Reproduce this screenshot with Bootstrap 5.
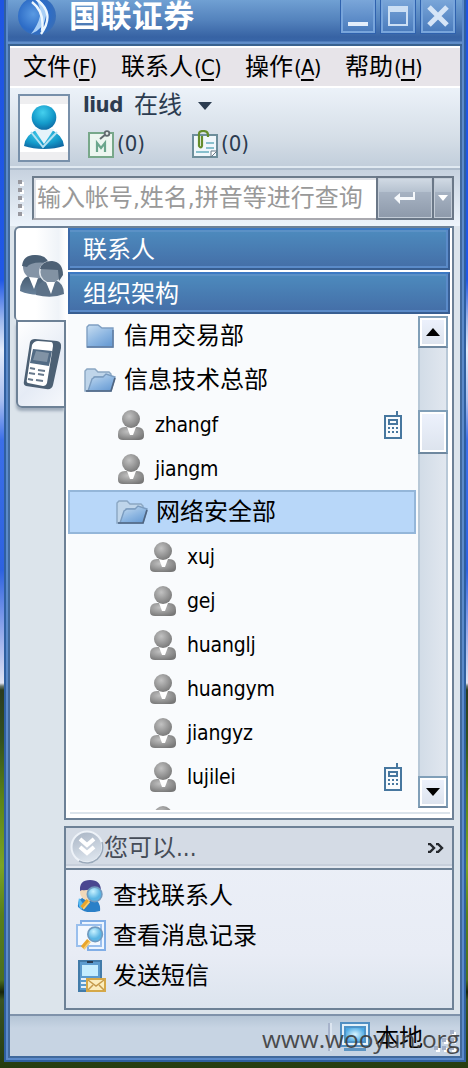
<!DOCTYPE html>
<html lang="zh-CN">
<head>
<meta charset="utf-8">
<meta name="viewport" content="width=device-width, initial-scale=1">
<title>国联证券</title>
<link href="https://cdn.jsdelivr.net/npm/bootstrap@5.3.0/dist/css/bootstrap.min.css" rel="stylesheet">
<script src="https://cdn.jsdelivr.net/npm/bootstrap@5.3.0/dist/js/bootstrap.bundle.min.js"></script>
<style>
*{border-radius:0}
body{width:468px;height:1068px;overflow:hidden;margin:0;padding:0 2px 6px 4px;font-family:"DejaVu Sans Condensed","Noto Sans CJK SC",sans-serif;font-size:24px;line-height:30px;color:#000;
background:linear-gradient(#1f55e2 0,#2058e6 280px,#9db8ee 320px,#e4ecfb 350px,#a8bff0 400px,#3c6fe8 440px,#2d62e0 570px,#a8b8ee 645px,#dfe3f2 683px,#6d7a72 686px,#2b3b20 690px,#33511f 740px,#5c8418 800px,#7ba326 866px,#587f1b 915px,#4b6e20 980px,#172409 992px,#3a5422 1000px,#263c10 1068px)}
body,.lt{font-weight:400}
.frame{height:1062px;padding:0 2px 2px;background:#5b8aca;border:solid #2f5f9f;border-width:0 2px 2px}
.inner{height:1058px;border:solid #41699c;border-width:0 2px 2px;background:#dce4eb}
.titlebar{height:46px;margin:0 -2px;background:linear-gradient(#70a0d3 0,#5483bd 20px,#3763a4 37px,#3966a8 41px,#6390cb 42px,#5c8ac6 44px,#39628f 44px);padding:0 7px 0 10px;color:#fff}
.brand{font-size:31px;font-weight:700;line-height:33px;letter-spacing:.4px;margin-left:13px}
.winbtn{width:34px;height:33px;border:2px solid #78a5db;border-top:0;box-shadow:0 0 0 1px #2f62ae;background:linear-gradient(#7aa6d9,#4b7cbd)}
.menubar{height:42px;background:#e7e4e9;border:solid #fff;border-width:2px 0;line-height:38px}
.menubar .lt{font-size:22px;letter-spacing:-.8px;margin-left:1px}
.menubar u{text-decoration-thickness:2px;text-underline-offset:4px}
.person{height:82px;background:linear-gradient(#ecf2f9,#d5dee7 50px,#c2cedb 78px,#e0e9f1 78px,#e0e9f1 80px,#aebccc 80px);color:#2c3c50}
.avatar{width:52px;height:68px;border:2px solid #7890aa;background:#fff;margin:6px 0 0 8px}
.search{height:56px;background:linear-gradient(#c7d2df,#edf4fb);padding:6px 6px 6px 8px}
.grip{width:6px;height:36px;margin-top:4px;background:repeating-linear-gradient(#98989f 0 4px,transparent 4px 8px) 0 0/4px 36px no-repeat,repeating-linear-gradient(#fff 0 4px,transparent 4px 8px) 2px 2px/4px 36px no-repeat}
.query{width:346px;height:44px;border:2px solid #6d7c8c;border-bottom-color:#aaaab0;border-right:0;box-shadow:inset 2px 2px #dfe2e8;background:#fff;color:#999;padding-left:3px;line-height:40px;font-size:24px;white-space:nowrap}
.go{height:44px;border:2px solid #6a7787;background:linear-gradient(#d2dbe5,#b6c2d0 34%,#a6b2c2 36%,#8d99aa);box-shadow:inset 0 0 0 1px #c3ccd7}
.main{height:594px;padding:0 6px 0 4px}
.tabs{width:52px;position:relative;z-index:1}
.tab1{height:94px;border:2px solid #6d8196;border-right:0;border-bottom:0;border-radius:6px 0 0 4px;background:linear-gradient(90deg,#fff 40%,#eff3f8 85%,#fff)}
.tab2{height:88px;width:50px;margin-left:2px;border:2px solid #6d8196;border-radius:0 0 0 6px;background:linear-gradient(135deg,#fff,#e5ebf5 60%,#f6f8fc);box-shadow:-1px 4px 3px -1px #9eabba}
.panel{width:390px;margin-left:-2px;border:2px solid #6d8196;background:#fff;padding-left:2px}
.group{width:382px;height:42px;margin-bottom:2px;border:2px solid;border-color:#3c79c3 #385f96 #385e91 #3b69a8;background:linear-gradient(#4d8bbe,#446ea7);box-shadow:inset -2px -2px #5b8bc9,inset 0 2px #5b91c6;color:#fff;padding-left:13px;line-height:40px}
.listing{height:496px}
.rows{width:350px;background:#f9fbfd;overflow:hidden;height:496px}
.item{width:348px;height:44px;border:2px solid transparent;font-size:24px}
.item .lt{font-size:21px;letter-spacing:-.2px;position:relative;top:1px;left:-1px}
.item.active{background:#b8d7f9;border-color:#94b6d9}
.lv1{padding-left:11px}.lv2{padding-left:44px}
.lv2u{padding-left:48px}.lv3u{padding-left:80px}
.lv2u svg,.lv3u svg{margin-top:2px}
.cell{margin-left:auto;margin-right:12px}
.scroll{width:30px;height:492px;margin-top:2px;border:solid #b8c8d7;border-width:0 2px;background:linear-gradient(90deg,#d2dce7,#e1e7ef)}
.sbtn{width:30px;margin-left:-2px;border:2px solid #809fb8;border-bottom-color:#6f889f;background:linear-gradient(#edf2fd,#dce3ed);box-shadow:inset 0 0 0 2px #fff}
.tasks{width:390px;height:184px;margin:6px 0 0 54px;border:2px solid #6d8196;background:linear-gradient(#ecf0f8,#e8ecf5 70%,#dce4ee)}
.taskhead{height:42px;border-bottom:2px solid #6d8196;background:linear-gradient(#d4dbe5 36px,#c7cfdb 36px,#c7cfdb 38px,#e3e8f0 38px);color:#454c57}
.task{height:40px;padding-left:10px;gap:7px}
.status{height:42px;margin-top:4px;border-top:2px solid #7f92aa;background:linear-gradient(#b5c5d6,#c7d4e3 12px);padding:2px 36px 0 0}
.mark-url{position:absolute;left:262px;top:1022px;font:24.4px/34px "Open Sans",sans-serif;color:#3c3c3c;opacity:.9;white-space:nowrap}
svg{display:block;flex:none}
</style>
</head>
<body>
<svg width="0" height="0" class="position-absolute">
<defs>
<radialGradient id="gh" cx=".4" cy=".35" r=".7"><stop stop-color="#c2c2c2"/><stop offset="1" stop-color="#777"/></radialGradient>
<linearGradient id="fold" x2=".7" y2="1"><stop stop-color="#c9def1"/><stop offset=".6" stop-color="#8eb7e2"/><stop offset="1" stop-color="#6c9ed5"/></linearGradient>
<radialGradient id="cy" cx=".45" cy=".3" r=".8"><stop stop-color="#45d0ee"/><stop offset=".55" stop-color="#149bcb"/><stop offset="1" stop-color="#0d5b98"/></radialGradient>
<linearGradient id="steel" x2="0" y2="1"><stop stop-color="#465b70"/><stop offset="1" stop-color="#68819a"/></linearGradient>
<radialGradient id="lens" cx=".4" cy=".3"><stop stop-color="#c8f2ff"/><stop offset="1" stop-color="#5bb5e4"/></radialGradient>
<symbol id="user" viewBox="0 0 26 30"><path d="M0 24q0-7 7-7h12q7 0 7 7v2q0 4-5 4H5q-5 0-5-4z" fill="url(#gh)"/><path d="M9 17h9l-3 8h-3z" fill="#fff"/><circle cx="13" cy="9" r="9" fill="url(#gh)"/></symbol>
<symbol id="folder" viewBox="0 0 28 24"><path d="M1 3l2-2h9l4 3h11v19H1z" fill="url(#fold)" stroke="#7f9fc2" stroke-width="1.4"/><path d="M1 23h26V6" fill="none" stroke="#5c7ba2" stroke-width="1.4"/></symbol>
<symbol id="open" viewBox="0 0 32 24"><path d="M1 3l2-2h8l3 3h11l2 2v3H10L5 23H1z" fill="#bfd5ea" stroke="#8aa6c2" stroke-width="1.4"/><path d="M4 23l4-12 3-2h8l3-3 9 3-4 14z" fill="url(#fold)" stroke="#7b9cc0" stroke-width="1.4"/><path d="M2 23h25l4-13" fill="none" stroke="#4f6582" stroke-width="1.7"/></symbol>
<symbol id="mobile" viewBox="0 0 18 28" shape-rendering="crispEdges"><path d="M12 0h2v4h-2zM0 4h18v24H0zM2 6v20h14V6z" fill="#47779f" fill-rule="evenodd"/><path d="M4 8h10v6H4zM6 10v2h6v-2z" fill="#47779f" fill-rule="evenodd"/><path d="M4 16h2v2H4zm4 0h2v2H8zm4 0h2v2h-2zM4 20h2v2H4zm4 0h2v2H8zm4 0h2v2h-2z" fill="#47779f"/></symbol>
<symbol id="glass" viewBox="0 0 22 24"><path d="M8 14L2 21" stroke="#e9a52b" stroke-width="4.5"/><path d="M9 15l-6 7" stroke="#f5cf76" stroke-width="1.5"/><circle cx="14" cy="8" r="7" fill="url(#lens)" stroke="#719abf" stroke-width="1.6"/></symbol>
</defs>
</svg>

<div class="frame"><div class="inner">
<header class="titlebar d-flex align-items-start">
  <svg width="38" height="35" viewBox="0 0 38 35"><defs><radialGradient id="ball" cx=".4" cy=".45" r=".6"><stop stop-color="#5a9ae2"/><stop offset=".7" stop-color="#2d6cc6"/><stop offset="1" stop-color="#376eb9"/></radialGradient></defs><circle cx="19" cy="16" r="19" fill="url(#ball)"/><path d="M18-1q12 5 10 17-2 13-15 18 7-9 9-18 1-8-4-17" fill="#a9cff6"/><path d="M18-1q20 14 5 35M14 2Q27 12 24 31" fill="none" stroke="#eef8ff" stroke-width="2.4"/></svg>
  <div class="brand">国联证券</div>
  <div class="d-flex ms-auto" style="gap:6px">
    <div class="winbtn"><svg width="30" height="31"><path d="M5 22h20v4H5z" fill="#e3eefb"/></svg></div>
    <div class="winbtn"><svg width="30" height="31"><path d="M5 6h20v20H5zM7 12v12h16V12z" fill="#ccdff4" fill-rule="evenodd"/></svg></div>
    <div class="winbtn"><svg width="30" height="31"><path d="M6 7l18 18M24 7L6 25" stroke="#d6e5f7" stroke-width="5"/></svg></div>
  </div>
</header>
<nav class="menubar d-flex">
  <div style="width:98px;margin-left:13px">文件<span class="lt">(<u>F</u>)</span></div>
  <div style="width:124px">联系人<span class="lt">(<u>C</u>)</span></div>
  <div style="width:100px">操作<span class="lt">(<u>A</u>)</span></div>
  <div>帮助<span class="lt">(<u>H</u>)</span></div>
</nav>
<section class="person d-flex">
  <div class="avatar"><svg width="48" height="64" viewBox="0 0 48 64"><path d="M0 0h48v8H0zM0 56h48v8H0z" fill="#eeeef0"/><path d="M4 50q1-11 14-17h12q13 6 14 17-9 3-20 3T4 50z" fill="url(#cy)"/><path d="M14 33l10 15 10-15" fill="#e5f3fa"/><path d="M11 36l12 15L37 36" fill="none" stroke="#b5e1f1" stroke-width="2"/><circle cx="24" cy="21.5" r="12.3" fill="url(#cy)"/></svg></div>
  <div style="margin-left:13px">
    <div class="d-flex align-items-center" style="height:34px"><b style="font-size:22px;letter-spacing:-.5px;width:51px">liud</b><span>在线</span><svg width="14" height="8" style="margin:2px 0 0 16px"><path d="M0 0h14L7 8z" fill="#2c3c50"/></svg></div>
    <div class="d-flex align-items-center" style="height:44px;font-size:22px;letter-spacing:0;padding-left:5px">
      <svg width="26" height="28" viewBox="0 0 26 28"><path d="M1 3h24v24H1z" fill="#edf6f0" stroke="#78a88a" stroke-width="2"/><path d="M12 9l6-5" stroke="#626b6f" stroke-width="2"/><circle cx="19" cy="3.5" r="2.3" fill="#e4ebe8" stroke="#626b6f" stroke-width="1.8"/><path d="M9 22v-9l4 5 4-5v9" fill="none" stroke="#6ba68c" stroke-width="2.2"/></svg>
      <span style="margin-left:3px;width:75px">(0)</span>
      <svg width="26" height="28" viewBox="0 0 26 28"><path d="M1 5h24v22H1z" fill="#f0f7fb" stroke="#6d8e9b" stroke-width="2"/><path d="M14 13h8M14 18h8M4 22h13" stroke="#65aebf" stroke-width="1.6"/><path d="M25 21l-6 6v-6z" fill="#fff" stroke="#687a88"/><path d="M10 6v10q-1 3-3 0V4q0-3 4-3 5 0 5 4v2" fill="none" stroke="#658d2c" stroke-width="2.2"/></svg>
      <span style="margin-left:3px">(0)</span>
    </div>
  </div>
</section>
<section class="search d-flex">
  <div class="grip"></div>
  <div class="query" style="margin-left:8px">输入帐号,姓名,拼音等进行查询</div>
  <div class="go d-flex align-items-center justify-content-center" style="width:58px;margin-left:-2px"><svg width="24" height="14"><path d="M1 7l6-5v4h13V1h2v8H7v4z" fill="#f5f8fb"/></svg></div>
  <div class="go d-flex align-items-center justify-content-center" style="width:22px;margin-left:-2px"><svg width="10" height="6"><path d="M0 0h10L5 6z" fill="#fff"/></svg></div>
</section>
<section class="main d-flex">
  <div class="tabs">
    <div class="tab1"><svg width="50" height="92" viewBox="0 0 50 92"><path d="M4 63q0-12 10-16h13q10 4 10 17-17 6-33-1z" fill="url(#steel)"/><circle cx="19" cy="39" r="12" fill="#8494a6"/><path d="M6 38q1-11 13-11 12 0 13 8-17-2-21 4z" fill="#4a5f74"/><path d="M13 49l5 12 4-11z" fill="#fff"/><path d="M20 67q0-12 10-15h9q9 3 9 14-12 5-28 1z" fill="#5d7288"/><circle cx="34" cy="44" r="11" fill="#dfe5eb"/><circle cx="35" cy="44" r="10.5" fill="#8292a3"/><path d="M24 41q2-8 12-8 11 1 11 14l-4 6-1-11z" fill="#4e6175"/><path d="M30 54l5 12 4-12z" fill="#fff"/></svg></div>
    <div class="tab2"><svg width="46" height="84" viewBox="0 0 46 84"><path d="M12 20q1-3 5-3l22 2q5 1 4 7l-8 37q-1 5-7 4L8 64q-3-1-2-5z" fill="#4c6074"/><path d="M14 23q2-4 6-4l13 1q2 0 2 4l-6 37q-1 3-4 3L10 61q-2-1-1-4z" fill="#fff"/><path d="M15 27l19 2-3 15-19-3z" fill="#526b84"/><path d="M18 29l13 2-2 9-14-2z" fill="#8193a5"/><path d="M12 46l5 1m3 1l7 1M11 51l6 1m3 0l6 1M10 57l5 1m3 0l7 1" stroke="#67798c" stroke-width="2"/></svg></div>
  </div>
  <div class="panel">
    <div class="group">联系人</div>
    <div class="group mb-0">组织架构</div>
    <div class="listing d-flex">
      <div class="rows">
        <div class="item d-flex align-items-center lv1"><svg style="margin:0 10px 0 5px" width="28" height="24"><use href="#folder"/></svg>信用交易部</div>
        <div class="item d-flex align-items-center lv1"><svg style="margin:0 8px 0 3px" width="32" height="24"><use href="#open"/></svg>信息技术总部</div>
        <div class="item d-flex align-items-center lv2u"><svg width="26" height="30" class="me-2"><use href="#user"/></svg><span class="lt ms-1">zhangf</span><svg width="18" height="28" class="cell"><use href="#mobile"/></svg></div>
        <div class="item d-flex align-items-center lv2u"><svg width="26" height="30" class="me-2"><use href="#user"/></svg><span class="lt ms-1">jiangm</span></div>
        <div class="item active d-flex align-items-center lv2"><svg style="margin:0 8px 0 2px" width="32" height="24"><use href="#open"/></svg>网络安全部</div>
        <div class="item d-flex align-items-center lv3u"><svg width="26" height="30" class="me-2"><use href="#user"/></svg><span class="lt ms-1">xuj</span></div>
        <div class="item d-flex align-items-center lv3u"><svg width="26" height="30" class="me-2"><use href="#user"/></svg><span class="lt ms-1">gej</span></div>
        <div class="item d-flex align-items-center lv3u"><svg width="26" height="30" class="me-2"><use href="#user"/></svg><span class="lt ms-1">huanglj</span></div>
        <div class="item d-flex align-items-center lv3u"><svg width="26" height="30" class="me-2"><use href="#user"/></svg><span class="lt ms-1">huangym</span></div>
        <div class="item d-flex align-items-center lv3u"><svg width="26" height="30" class="me-2"><use href="#user"/></svg><span class="lt ms-1">jiangyz</span></div>
        <div class="item d-flex align-items-center lv3u"><svg width="26" height="30" class="me-2"><use href="#user"/></svg><span class="lt ms-1">lujilei</span><svg width="18" height="28" class="cell"><use href="#mobile"/></svg></div>
        <div class="item d-flex align-items-center lv3u"><svg width="26" height="30"><use href="#user"/></svg></div>
      </div>
      <div class="scroll d-flex flex-column">
        <div class="sbtn d-flex align-items-center justify-content-center" style="height:32px"><svg width="14" height="8"><path d="M0 8L7 0l7 8z"/></svg></div>
        <div class="sbtn" style="height:44px;margin-top:62px"></div>
        <div class="sbtn d-flex align-items-center justify-content-center mt-auto" style="height:32px"><svg width="14" height="8"><path d="M0 0h14L7 8z"/></svg></div>
      </div>
    </div>
    <div style="height:2px;margin:2px 2px 0 2px;background:#dce4eb"></div>
  </div>
</section>
<section class="tasks">
  <div class="taskhead d-flex align-items-center">
    <svg width="34" height="34" style="margin:-2px 0 0 4px" viewBox="0 0 34 34"><defs><linearGradient id="disc" x2=".3" y2="1"><stop stop-color="#a7b3c3"/><stop offset="1" stop-color="#dbe3ec"/></linearGradient></defs><circle cx="17" cy="17" r="15.5" fill="url(#disc)" stroke="#edf2f8" stroke-width="2"/><path d="M32 12a16 16 0 0 1-23 19" fill="none" stroke="#9aa9ba" stroke-width="1.5"/><path d="M10 9l7 6 7-6M10 17l7 6 7-6" fill="none" stroke="#fff" stroke-width="4"/></svg>
    <span>您可以...</span>
    <svg width="16" height="10" class="ms-auto" style="margin-right:8px"><path d="M0 1h2l4 4-4 4H0M8 1h2l4 4-4 4H8" fill="none" stroke="#25282d" stroke-width="2.4"/></svg>
  </div>
  <div style="padding-top:6px">
    <div class="task d-flex align-items-center"><svg width="30" height="32" viewBox="0 0 30 32"><path d="M2 27q-1-9 8-10l9 2q6 4 5 12-12 3-18-1z" fill="#2b80c8"/><path d="M3 18l5 7-3 5q-4-6-2-12z" fill="#57baf1"/><circle cx="13" cy="12" r="9" fill="#f2d8b9"/><path d="M4 11Q3 0 14 0t11 11l-6-3q-9 3-13 2z" fill="#4a4690"/><svg x="4" y="6" width="23" height="25"><use href="#glass"/></svg></svg>查找联系人</div>
    <div class="task d-flex align-items-center"><svg width="30" height="32" viewBox="0 0 30 32"><path d="M5 1h24v29H12V5H5z" fill="#edf5ff" stroke="#81aee6" stroke-width="2"/><path d="M1 5h24v21H1z" fill="#f3f8ff" stroke="#9abfed" stroke-width="2"/><svg x="4" y="6" width="24" height="25"><use href="#glass"/></svg></svg>查看消息记录</div>
    <div class="task d-flex align-items-center"><svg width="30" height="32" viewBox="0 0 30 32"><path d="M3 1h22v30H3z" fill="#5b9bce" stroke="#427ba9" stroke-width="2"/><path d="M6 5h16v11H6z" fill="#c4edff"/><path d="M11 2h6" stroke="#293b50" stroke-width="2"/><path d="M5 19h5m2 0h4M5 23h5M5 27h5" stroke="#e4f0fa" stroke-width="2"/><path d="M11 19h18v12H11z" fill="#fbedbd" stroke="#d5a848" stroke-width="2"/><path d="M12 20l8 6 8-6M12 30l5-5m6 0l5 5" fill="none" stroke="#c59a4c" stroke-width="1.5"/></svg>发送短信</div>
  </div>
</section>
<footer class="status d-flex align-items-center justify-content-end">
  <div style="width:4px;height:28px;border-left:2px solid #a7b3cb;border-right:2px solid #dce5f0;margin-right:8px"></div>
  <svg width="30" height="30" viewBox="0 0 30 30"><defs><radialGradient id="scr"><stop stop-color="#dcf7ff"/><stop offset="1" stop-color="#4eaae4"/></radialGradient></defs><path d="M1 1h28v23H1z" fill="#e5f2fa" stroke="#528fc2" stroke-width="2"/><path d="M5 5h20v15H5z" fill="url(#scr)" stroke="#4e94c8" stroke-width="2"/><path d="M4 26h22v3H4z" fill="#5c93c1"/></svg>
  <span style="margin:2px 1px 0 5px">本地</span>
</footer>
</div></div>
<svg class="position-absolute" style="left:434px;top:1030px" width="22" height="22"><path d="M16 0h4v4h-4zM8 8h4v4H8zm8 0h4v4h-4zM0 16h4v4H0zm8 0h4v4H8zm8 0h4v4h-4z" fill="#fff" transform="translate(2 2)"/><path d="M16 0h4v4h-4zM8 8h4v4H8zm8 0h4v4h-4zM0 16h4v4H0zm8 0h4v4H8zm8 0h4v4h-4z" fill="#a3b0c8"/></svg>
<div class="mark-url">www.wooyun.org</div>
</body>
</html>
